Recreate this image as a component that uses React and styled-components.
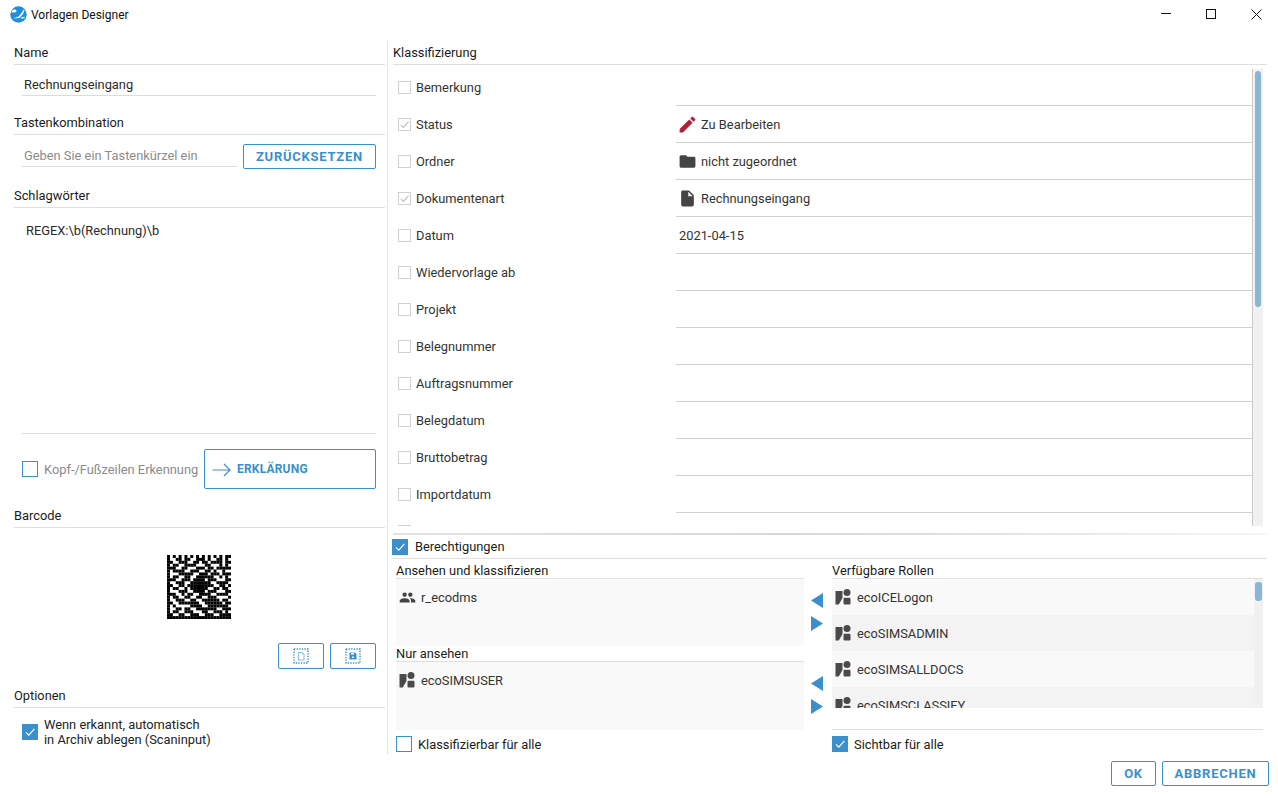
import React from "react";
import styled, { createGlobalStyle } from "styled-components";

const Global = createGlobalStyle`
  html, body { margin: 0; padding: 0; background: #fff; }
  body { font-family: Roboto, "Liberation Sans", sans-serif; font-size: 12.85px; color: #222; }
  * { box-sizing: border-box; }
`;

const BLUE = "#3b8fcb";

const Window = styled.div`
  width: 1278px;
  height: 798px;
  overflow: hidden;
  display: flex;
  flex-direction: column;
  background: #fff;
`;
const TitleBar = styled.div`
  height: 30px;
  flex: none;
  display: flex;
  align-items: center;
  padding: 0 0 2px 10px;
`;
const TitleText = styled.span`
  margin: 2px 0 0 4px;
  font-family: Roboto, sans-serif;
  font-size: 12px;
  color: #111;
  flex: 1;
`;
const WinControls = styled.div`
  display: flex;
  align-items: center;
  gap: 35px;
  padding-right: 16px;
`;
const Main = styled.div`
  flex: 1;
  margin-top: 11px;
  display: flex;
  min-height: 0;
`;
const Left = styled.div`
  width: 371px;
  margin-left: 14px;
  display: flex;
  flex-direction: column;
`;
const VDivider = styled.div`
  width: 1px;
  height: 714px;
  margin: 0 5px 0 2px;
  background: #e6e6e6;
`;
const Right = styled.div`
  width: 874px;
  display: flex;
  flex-direction: column;
`;
const Head = styled.div`
  height: 24px;
  flex: none;
  line-height: 23px;
  border-bottom: 1px solid #e0e0e0;
  margin-top: ${(p) => p.$top || 0}px;
  color: #1a1a1a;
`;
const NameField = styled.div`
  height: 31px;
  margin: 0 9px 0 8px;
  padding: 9px 0 0 2px;
  line-height: 21px;
  border-bottom: 1px solid #dcdcdc;
  color: #2a2a2a;
`;
const KeyRow = styled.div`
  height: 34px;
  margin: 0 9px 0 8px;
  display: flex;
  align-items: flex-end;
  justify-content: space-between;
`;
const KeyInput = styled.div`
  width: 215px;
  height: 32px;
  margin-bottom: 2px;
  padding: 10px 0 0 2px;
  line-height: 21px;
  border-bottom: 1px solid #dcdcdc;
  color: #8c8c8c;
`;
const OutlineButton = styled.button`
  appearance: none;
  background: #fff;
  border: 1px solid ${BLUE};
  border-radius: 2px;
  padding: 0;
  width: ${(p) => p.$w}px;
  height: ${(p) => p.$h || 25}px;
  color: ${BLUE};
  font-family: Roboto, sans-serif;
  font-weight: 700;
  font-size: 13px;
  letter-spacing: 0.75px;
  display: flex;
  align-items: center;
  justify-content: center;
`;
const KeywordArea = styled.div`
  height: 226px;
  margin: 0 9px 0 8px;
  padding: 14px 0 0 4px;
  line-height: 17px;
  border-bottom: 1px solid #dcdcdc;
  flex: none;
  color: #2a2a2a;
`;
const HeaderRow = styled.div`
  height: 55px;
  flex: none;
  margin: 0 9px 0 8px;
  display: flex;
  align-items: flex-end;
  justify-content: space-between;
`;
const CheckLabel = styled.div`
  display: flex;
  align-items: center;
  gap: 6px;
  color: ${(p) => (p.$muted ? "#8a8a8a" : "#222")};
  line-height: 15px;
`;
const HeaderCheck = styled(CheckLabel)`
  height: 40px;
`;
const ExplainButton = styled(OutlineButton)`
  justify-content: flex-start;
  padding: 0 0 0 7px;
  gap: 6px;
  font-size: 12px;
  letter-spacing: 0.2px;
  svg { position: relative; top: 1px; }
`;
const BarcodeWrap = styled.div`
  height: 115px;
  flex: none;
  display: flex;
  justify-content: center;
  padding: 27px 2px 0 0;
`;
const BarcodeButtons = styled.div`
  display: flex;
  justify-content: flex-end;
  gap: 6px;
  margin-right: 9px;
  flex: none;
`;
const OptionRow = styled.div`
  margin: 9px 0 0 8px;
`;
const Box = styled.div`
  width: ${(p) => p.$s || 16}px;
  height: ${(p) => p.$s || 16}px;
  flex: none;
  display: flex;
  align-items: center;
  justify-content: center;
  background: ${(p) => (p.$on ? BLUE : "#fff")};
  border: 1px solid ${(p) => (p.$on ? BLUE : p.$gray ? "#d2d2d2" : BLUE)};
`;
const TableWrap = styled.div`
  height: 461px;
  flex: none;
  display: flex;
  overflow: hidden;
`;
const Rows = styled.div`
  flex: none;
  width: 859px;
  padding-top: 4px;
`;
const Row = styled.div`
  height: 37px;
  display: flex;
  align-items: stretch;
`;
const RowLabel = styled.div`
  width: 283px;
  flex: none;
  padding-left: 5px;
  display: flex;
  align-items: center;
  gap: 5px;
  color: #333;
`;
const RowValue = styled.div`
  flex: 1;
  border-bottom: 1px solid #cfcfcf;
  padding: 0 0 0 3px;
  display: flex;
  align-items: center;
  gap: 4px;
  color: #333;
`;
const IconSlot = styled.span`
  width: 20px;
  margin-left: -2px;
  flex: none;
  display: flex;
  justify-content: center;
`;
const ScrollTrack = styled.div`
  width: ${(p) => p.$w || 11}px;
  margin-top: ${(p) => p.$top || 0}px;
  flex: none;
  background: #f1f1f1;
  border-left: ${(p) => (p.$line ? "1px solid #c9c9c9" : "none")};
  padding: ${(p) => p.$pad};
`;
const ScrollThumb = styled.div`
  height: ${(p) => p.$h}px;
  background: #8ab6d6;
  border-radius: 3px;
`;
const ShadowLine = styled.div`
  height: 2px;
  flex: none;
  margin-top: 7px;
  background: linear-gradient(90deg, #e4e4e4 0%, #d8d8d8 45%, #dedede 60%, #f6f6f6 100%);
`;
const PermHead = styled.div`
  height: 24px;
  flex: none;
  display: flex;
  align-items: center;
  gap: 7px;
  margin-left: -1px;
  border-bottom: 1px solid #e0e0e0;
  color: #1a1a1a;
`;
const Lists = styled.div`
  display: flex;
  padding-left: 3px;
  flex: none;
`;
const ListColumn = styled.div`
  width: ${(p) => p.$w}px;
  flex: none;
  display: flex;
  flex-direction: column;
`;
const ListTitle = styled.div`
  height: ${(p) => p.$h}px;
  flex: none;
  display: flex;
  align-items: flex-end;
  line-height: 15px;
  border-bottom: 1px solid #e0e0e0;
  color: #1a1a1a;
`;
const ListBox = styled.div`
  height: ${(p) => p.$h}px;
  flex: none;
  background: #f9f9f9;
`;
const ListItem = styled.div`
  height: 36px;
  display: flex;
  align-items: center;
  padding-left: 3px;
  gap: 6px;
  color: #333;
  background: ${(p) => (p.$alt ? "#f3f3f3" : "#f9f9f9")};
`;
const GroupItem = styled(ListItem)`
  gap: 5px;
`;
const AvailableBox = styled.div`
  height: 129px;
  flex: none;
  display: flex;
  overflow: hidden;
`;
const AvailableRows = styled.div`
  flex: 1;
`;
const Arrows = styled.div`
  width: 28px;
  flex: none;
  display: flex;
  flex-direction: column;
  padding: 34px 0 0 7px;
`;
const ArrowPair = styled.div`
  display: flex;
  flex-direction: column;
  gap: 8px;
  height: 83px;
`;
const BottomRow = styled.div`
  height: 22px;
  flex: none;
  display: flex;
  align-items: flex-end;
  gap: 6px;
  color: #1a1a1a;
`;
const AvailableBottom = styled(BottomRow)`
  height: 23px;
  border-top: 1px solid #dcdcdc;
  margin-top: 21px;
`;
const Footer = styled.div`
  display: flex;
  justify-content: flex-end;
  gap: 6px;
  margin: 2px -2px 0 0;
`;

const Check = ({ color = "#fff", size = 12 }) => (
  <svg width={size} height={size} viewBox="0 0 12 12" fill="none">
    <path d="M2 6.4 4.800 9.200 10.400 2.800" stroke={color} strokeWidth="1.1" />
  </svg>
);
const Mat = ({ d, size = 18, color = "#444" }) => (
  <svg width={size} height={size} viewBox="0 0 24 24" fill={color} style={{ flex: "none" }}>
    <path d={d} />
  </svg>
);
const EDIT = "M3 17.25V21h3.75L17.81 9.94l-3.75-3.75L3 17.25zM20.71 7.04a1 1 0 0 0 0-1.41l-2.34-2.34a1 1 0 0 0-1.41 0l-1.83 1.83 3.75 3.75 1.83-1.83z";
const FOLDER = "M10 4H4c-1.1 0-2 .9-2 2v12c0 1.1.9 2 2 2h16c1.1 0 2-.9 2-2V8c0-1.1-.9-2-2-2h-8l-2-2z";
const FILE = "M6 2c-1.1 0-2 .9-2 2v16c0 1.1.9 2 2 2h12c1.1 0 2-.9 2-2V8l-6-6H6zm7 7V3.5L18.5 9H13z";
const GROUP = "M16 11c1.66 0 2.99-1.34 2.99-3S17.66 5 16 5c-1.66 0-3 1.34-3 3s1.34 3 3 3zm-8 0c1.66 0 2.99-1.34 2.99-3S9.66 5 8 5C6.34 5 5 6.34 5 8s1.34 3 3 3zm0 2c-2.33 0-7 1.17-7 3.5V19h14v-2.5c0-2.33-4.67-3.5-7-3.5zm8 0c-.29 0-.62.02-.97.05 1.16.84 1.97 1.97 1.97 3.45V19h6v-2.5c0-2.33-4.67-3.5-7-3.5z";

const RoleIcon = () => (
  <svg width="16" height="16" viewBox="0 0 16 16" fill="#4a4a4a" style={{ flex: "none" }}>
    <path d="M0.500 2H7.500V9L3.800 15.500H0.500z" />
    <circle cx="12" cy="3.600" r="3.500" />
    <rect x="8.500" y="8.800" width="7" height="6.700" rx="1.200" />
  </svg>
);
const Logo = () => (
  <svg width="17" height="17" viewBox="0 0 17 17" style={{ flex: "none" }}>
    <circle cx="8.500" cy="8.500" r="8.200" fill="#1f8fdc" />
    <path d="M1.500 4.500 5 3.200 6.800 5 5 6.600H1.800z" fill="#fff" />
    <path d="M3 12.500 8.500 10.500 12 6.500 13.500 3.500 14.500 4.500 13 8 9.500 12z" fill="#fff" />
    <path d="M11 11.500 14.500 10.800 14.800 12 11.500 12.800z" fill="#fff" />
  </svg>
);
const ArrowRightLong = () => (
  <svg width="19" height="14" viewBox="0 0 19 14" fill="none" style={{ flex: "none" }}>
    <path d="M0.500 7H17.500M12 1 18 7 12 13" stroke={BLUE} strokeWidth="1.2" />
  </svg>
);
const Tri = ({ dir }) => (
  <svg width="12" height="15" viewBox="0 0 12 15" style={{ display: "block", flex: "none" }}>
    <path d={dir === "left" ? "M12 0V15L0 7.500z" : "M0 0V15L12 7.500z"} fill={BLUE} />
  </svg>
);
const DottedFrame = ({ children }) => (
  <svg width="16" height="16" viewBox="0 0 16 16" fill="none">
    <rect x="1" y="1" width="14" height="14" stroke={BLUE} strokeDasharray="1.300 1.300" strokeWidth="1.400" />
    {children}
  </svg>
);
const CopyIcon = () => (
  <DottedFrame>
    <path d="M5.500 4.500h3.500l2 2v5.500h-5.500z" stroke="#8fbddd" strokeWidth="1.100" />
  </DottedFrame>
);
const SaveIcon = () => (
  <DottedFrame>
    <path d="M4.500 4.500h5.500l1.500 1.500v5.500h-7z" fill={BLUE} />
    <rect x="6" y="4.800" width="3" height="1.800" fill="#fff" />
    <circle cx="8" cy="9.300" r="1" fill="#fff" />
  </DottedFrame>
);

const MATRIX = [
  "1010101010101010101011",
  "1001101100111010011010",
  "1100111001101101111011",
  "1011001111000110001010",
  "1110011000111011011111",
  "1011110011100110100100",
  "1000111110011101110111",
  "1011001100111111001010",
  "1110011101111011100011",
  "1001110011111110011110",
  "1100110111111111001101",
  "1011001011111100110110",
  "1000111001111011100011",
  "1110010110011110011110",
  "1011001100110011100001",
  "1001110011001111110110",
  "1100111111100111111011",
  "1010000011110011111110",
  "1001101100111111100111",
  "1011001110001100111010",
  "1100110011100111001111",
  "1111111111111111111111",
];
const Barcode = () => (
  <svg width="64" height="64" viewBox="0 0 22 22" style={{ display: "block" }}>
    {MATRIX.map((r, y) =>
      r.split("").map((c, x) =>
        c === "1" ? <rect key={`${x}-${y}`} x={x} y={y} width="1.020" height="1.020" fill="#000" /> : null
      )
    )}
  </svg>
);

const rows = [
  { label: "Bemerkung" },
  { label: "Status", checked: true, icon: <Mat d={EDIT} size={21} color="#b0203a" />, value: "Zu Bearbeiten" },
  { label: "Ordner", icon: <Mat d={FOLDER} size={19} />, value: "nicht zugeordnet" },
  { label: "Dokumentenart", checked: true, icon: <Mat d={FILE} size={19} />, value: "Rechnungseingang" },
  { label: "Datum", value: "2021-04-15" },
  { label: "Wiedervorlage ab" },
  { label: "Projekt" },
  { label: "Belegnummer" },
  { label: "Auftragsnummer" },
  { label: "Belegdatum" },
  { label: "Bruttobetrag" },
  { label: "Importdatum" },
  { label: "" },
];

const roles = ["ecoICELogon", "ecoSIMSADMIN", "ecoSIMSALLDOCS", "ecoSIMSCLASSIFY"];

export default function App() {
  return (
    <Window>
      <Global />
      <TitleBar>
        <Logo />
        <TitleText>Vorlagen Designer</TitleText>
        <WinControls>
          <svg width="10" height="10" viewBox="0 0 10 10"><path d="M0 4.500H10" stroke="#111" /></svg>
          <svg width="10" height="10" viewBox="0 0 10 10" fill="none"><rect x=".5" y=".5" width="9" height="9" stroke="#111" /></svg>
          <svg width="11" height="11" viewBox="0 0 11 11"><path d="M.5.500 10.500 10.500M10.500.500.500 10.500" stroke="#111" /></svg>
        </WinControls>
      </TitleBar>
      <Main>
        <Left>
          <Head>Name</Head>
          <NameField>Rechnungseingang</NameField>
          <Head $top={15}>Tastenkombination</Head>
          <KeyRow>
            <KeyInput>Geben Sie ein Tastenkürzel ein</KeyInput>
            <OutlineButton $w={133}>ZURÜCKSETZEN</OutlineButton>
          </KeyRow>
          <Head $top={15}>Schlagwörter</Head>
          <KeywordArea>REGEX:\b(Rechnung)\b</KeywordArea>
          <HeaderRow>
            <HeaderCheck $muted>
              <Box />
              Kopf-/Fußzeilen Erkennung
            </HeaderCheck>
            <ExplainButton $w={172} $h={40}>
              <ArrowRightLong />
              <span>ERKLÄRUNG</span>
            </ExplainButton>
          </HeaderRow>
          <Head $top={15}>Barcode</Head>
          <BarcodeWrap>
            <Barcode />
          </BarcodeWrap>
          <BarcodeButtons>
            <OutlineButton $w={46} $h={26}><CopyIcon /></OutlineButton>
            <OutlineButton $w={46} $h={26}><SaveIcon /></OutlineButton>
          </BarcodeButtons>
          <Head $top={15}>Optionen</Head>
          <OptionRow>
            <CheckLabel>
              <Box $on><Check /></Box>
              <span>Wenn erkannt, automatisch<br />in Archiv ablegen (Scaninput)</span>
            </CheckLabel>
          </OptionRow>
        </Left>
        <VDivider />
        <Right>
          <Head>Klassifizierung</Head>
          <TableWrap>
            <Rows>
              {rows.map((r, i) => (
                <Row key={i}>
                  <RowLabel>
                    <Box $s={13} $gray>{r.checked && <Check color="#bdbdbd" size={11} />}</Box>
                    {r.label}
                  </RowLabel>
                  <RowValue>
                    {r.icon && <IconSlot>{r.icon}</IconSlot>}
                    {r.value}
                  </RowValue>
                </Row>
              ))}
            </Rows>
            <ScrollTrack $line $top={4} $pad="2px 2px 0 2px"><ScrollThumb $h={236} /></ScrollTrack>
          </TableWrap>
          <ShadowLine />
          <PermHead>
            <Box $on><Check /></Box>
            Berechtigungen
          </PermHead>
          <Lists>
            <ListColumn $w={408}>
              <ListTitle $h={20}>Ansehen und klassifizieren</ListTitle>
              <ListBox $h={67}>
                <GroupItem><Mat d={GROUP} size={17} />r_ecodms</GroupItem>
              </ListBox>
              <ListTitle $h={16}>Nur ansehen</ListTitle>
              <ListBox $h={68}>
                <ListItem><RoleIcon />ecoSIMSUSER</ListItem>
              </ListBox>
              <BottomRow>
                <Box />
                Klassifizierbar für alle
              </BottomRow>
            </ListColumn>
            <Arrows>
              <ArrowPair><Tri dir="left" /><Tri dir="right" /></ArrowPair>
              <ArrowPair><Tri dir="left" /><Tri dir="right" /></ArrowPair>
            </Arrows>
            <ListColumn $w={431}>
              <ListTitle $h={20}>Verfügbare Rollen</ListTitle>
              <AvailableBox>
                <AvailableRows>
                  {roles.map((r, i) => (
                    <ListItem key={r} $alt={i % 2 === 1}><RoleIcon />{r}</ListItem>
                  ))}
                </AvailableRows>
                <ScrollTrack $w={9} $pad="3px 1px 0"><ScrollThumb $h={19} /></ScrollTrack>
              </AvailableBox>
              <AvailableBottom>
                <Box $on><Check /></Box>
                Sichtbar für alle
              </AvailableBottom>
            </ListColumn>
          </Lists>
          <Footer>
            <OutlineButton $w={45}>OK</OutlineButton>
            <OutlineButton $w={107}>ABBRECHEN</OutlineButton>
          </Footer>
        </Right>
      </Main>
    </Window>
  );
}
